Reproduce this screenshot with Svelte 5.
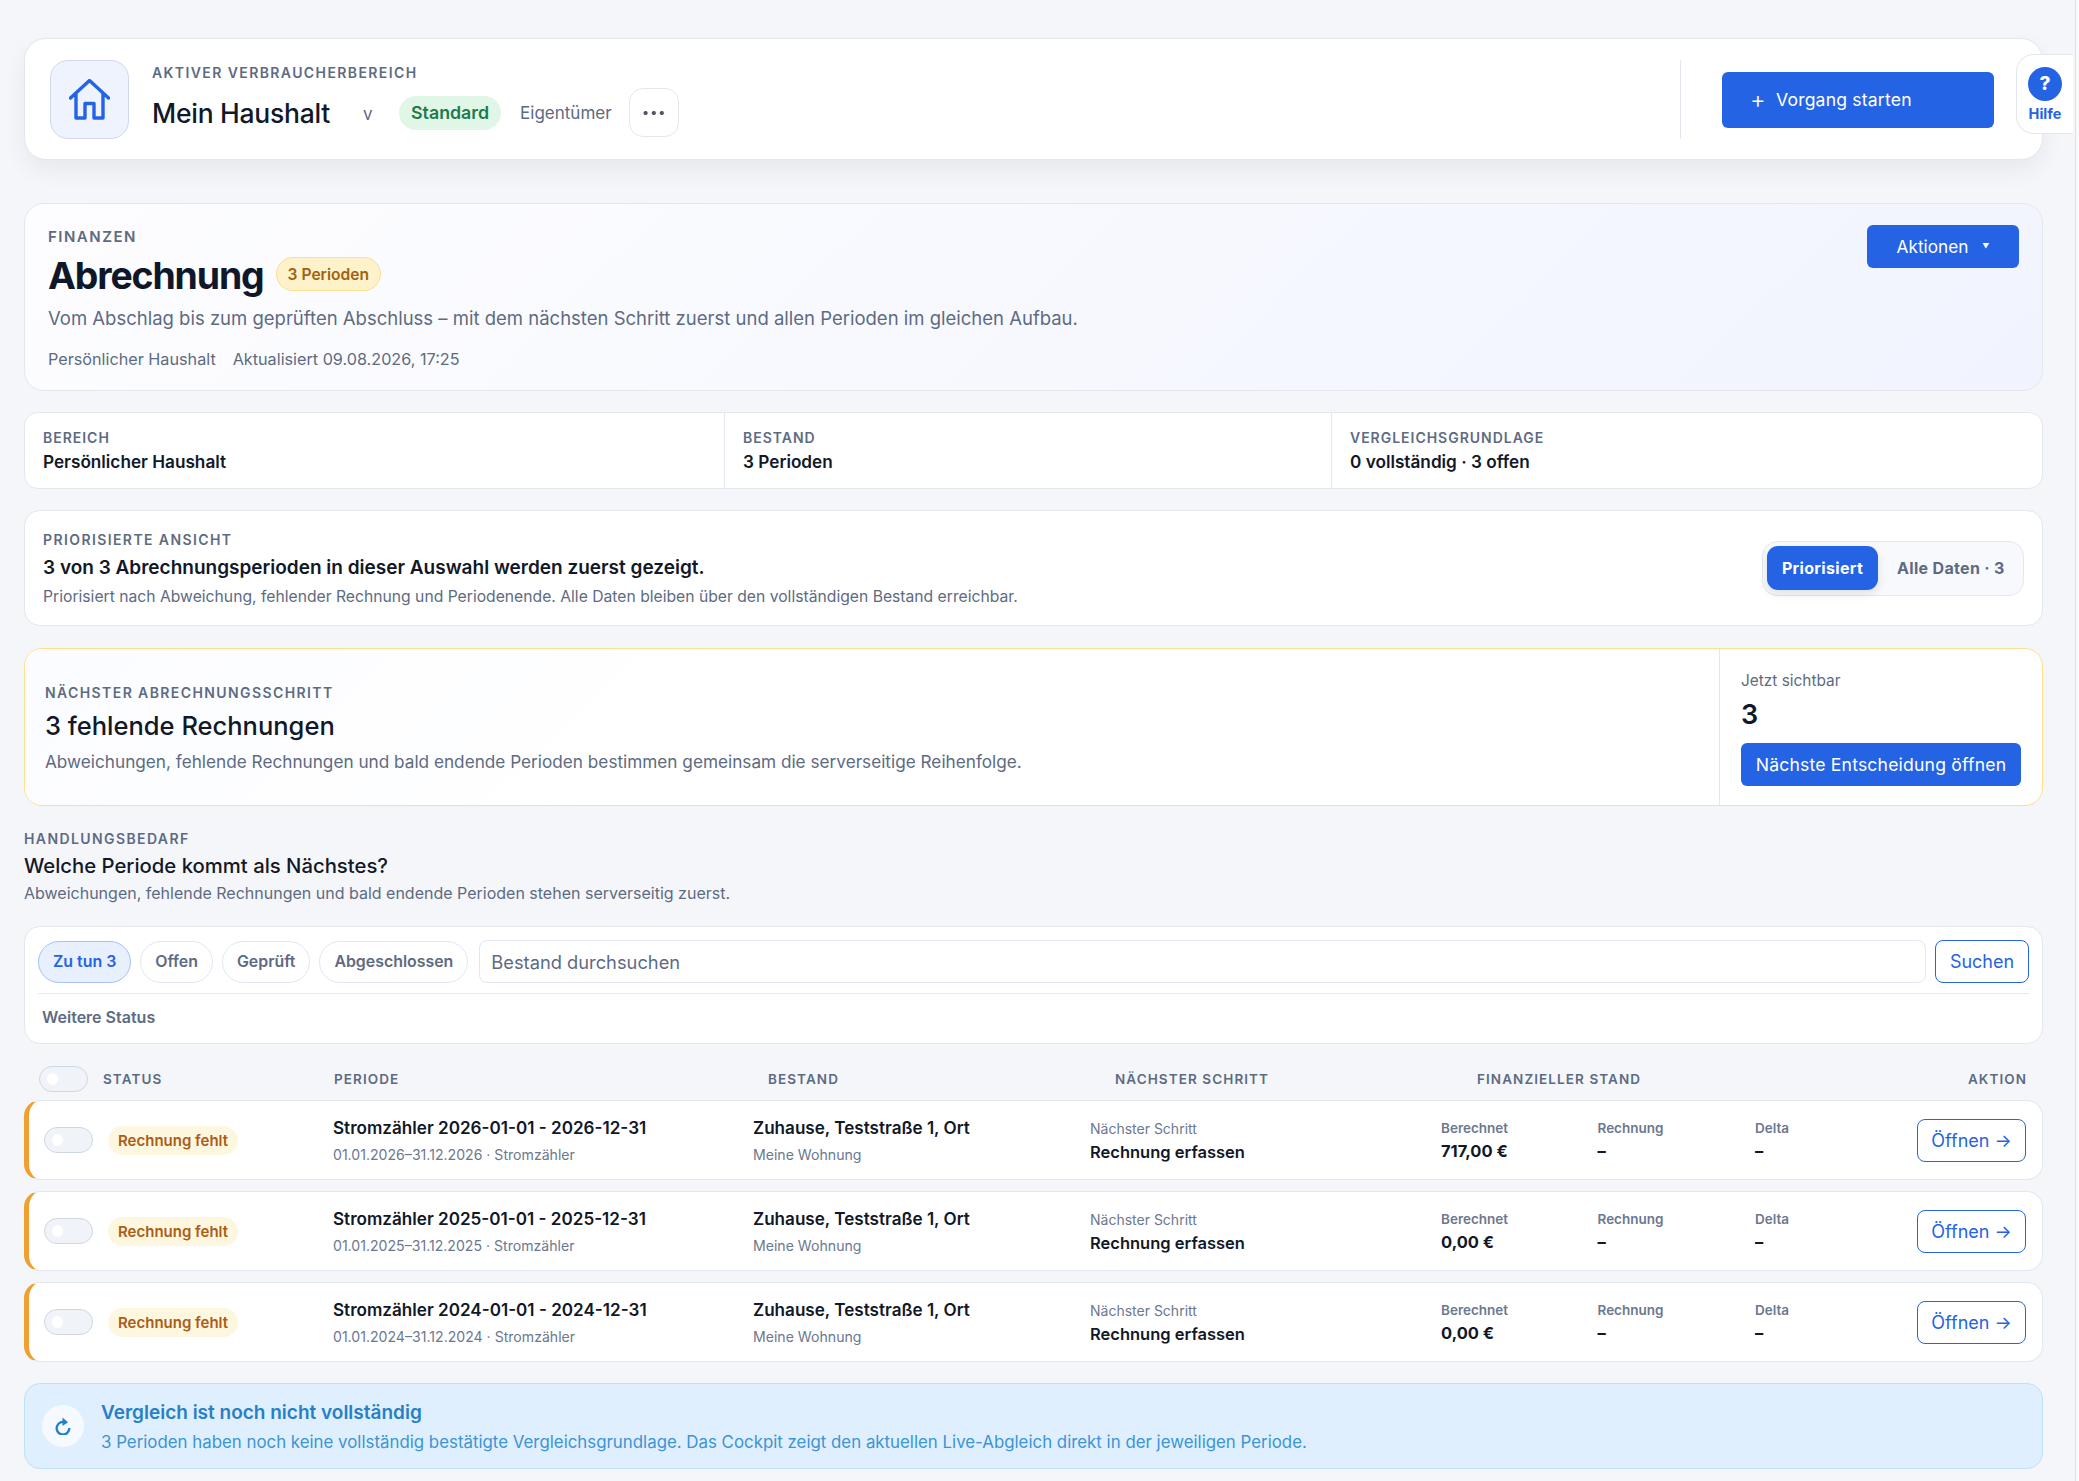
<script>
const rows = [
	{ title: 'Stromzähler 2026-01-01 - 2026-12-31', range: '01.01.2026–31.12.2026 · Stromzähler', amount: '717,00 €' },
	{ title: 'Stromzähler 2025-01-01 - 2025-12-31', range: '01.01.2025–31.12.2025 · Stromzähler', amount: '0,00 €' },
	{ title: 'Stromzähler 2024-01-01 - 2024-12-31', range: '01.01.2024–31.12.2024 · Stromzähler', amount: '0,00 €' }
];
const pills = ['Offen', 'Geprüft', 'Abgeschlossen'];
</script>

<div class="page">
	<main class="main">
		<header class="topbar">
			<div class="home">
				<svg width="41" height="41" viewBox="0 0 41 41" fill="none" stroke="#2563e5" stroke-width="3.4" stroke-linejoin="round" stroke-linecap="round">
					<path d="M1.5 19 L20.5 1.5 L39.5 19 M7 14.5 V39 H16 V24.5 H25 V39 H34 V14.5" />
				</svg>
			</div>
			<div class="scope">
				<div class="eyebrow">AKTIVER VERBRAUCHERBEREICH</div>
				<div class="scope-row">
					<span class="scope-name">Mein Haushalt</span>
					<span class="scope-caret">v</span>
					<span class="pill-green">Standard</span>
					<span class="role">Eigentümer</span>
					<button class="dots">···</button>
				</div>
			</div>
			<div class="top-action">
				<button class="btn start"><span class="plus">+</span>Vorgang starten</button>
			</div>
			<div class="help">
				<span class="help-dot">?</span>
				<span class="help-label">Hilfe</span>
			</div>
		</header>

		<section class="hero">
			<div>
				<div class="eyebrow hero-label">FINANZEN</div>
				<div class="hero-title">
					<h1>Abrechnung</h1>
					<span class="pill-amber">3 Perioden</span>
				</div>
				<p class="hero-desc">Vom Abschlag bis zum geprüften Abschluss – mit dem nächsten Schritt zuerst und allen Perioden im gleichen Aufbau.</p>
				<div class="hero-meta"><span>Persönlicher Haushalt</span><span>Aktualisiert 09.08.2026, 17:25</span></div>
			</div>
			<button class="btn actions">Aktionen<span class="tri">▼</span></button>
		</section>

		<section class="summary">
			<div class="cell"><div class="eyebrow small">BEREICH</div><div class="cell-value">Persönlicher Haushalt</div></div>
			<div class="cell"><div class="eyebrow small">BESTAND</div><div class="cell-value">3 Perioden</div></div>
			<div class="cell"><div class="eyebrow small">VERGLEICHSGRUNDLAGE</div><div class="cell-value">0 vollständig · 3 offen</div></div>
		</section>

		<section class="priority">
			<div class="priority-text">
				<div class="eyebrow small">PRIORISIERTE ANSICHT</div>
				<div class="priority-title">3 von 3 Abrechnungsperioden in dieser Auswahl werden zuerst gezeigt.</div>
				<div class="priority-sub">Priorisiert nach Abweichung, fehlender Rechnung und Periodenende. Alle Daten bleiben über den vollständigen Bestand erreichbar.</div>
			</div>
			<div class="segment">
				<span class="seg on">Priorisiert</span>
				<span class="seg">Alle Daten · 3</span>
			</div>
		</section>

		<section class="next">
			<div class="next-main">
				<div class="eyebrow small">NÄCHSTER ABRECHNUNGSSCHRITT</div>
				<h2>3 fehlende Rechnungen</h2>
				<p>Abweichungen, fehlende Rechnungen und bald endende Perioden bestimmen gemeinsam die serverseitige Reihenfolge.</p>
			</div>
			<div class="next-side">
				<div class="side-label">Jetzt sichtbar</div>
				<div class="side-count">3</div>
				<button class="btn decide">Nächste Entscheidung öffnen</button>
			</div>
		</section>

		<section class="need">
			<div class="eyebrow small">HANDLUNGSBEDARF</div>
			<h3>Welche Periode kommt als Nächstes?</h3>
			<p>Abweichungen, fehlende Rechnungen und bald endende Perioden stehen serverseitig zuerst.</p>
		</section>

		<section class="filters">
			<div class="filter-row">
				<span class="fpill active">Zu tun 3</span>
				{#each pills as p}
					<span class="fpill">{p}</span>
				{/each}
				<input class="search" placeholder="Bestand durchsuchen" />
				<button class="search-btn">Suchen</button>
			</div>
			<div class="more">Weitere Status</div>
		</section>

		<div class="thead">
			<div class="th-status"><span class="toggle"></span><span>STATUS</span></div>
			<div>PERIODE</div>
			<div>BESTAND</div>
			<div>NÄCHSTER SCHRITT</div>
			<div>FINANZIELLER STAND</div>
			<div class="th-action">AKTION</div>
		</div>

		<div class="rows">
			{#each rows as r}
				<article class="row">
					<div class="status"><span class="toggle"></span><span class="missing">Rechnung fehlt</span></div>
					<div class="text-block">
						<div class="strong">{r.title}</div>
						<div class="sub">{r.range}</div>
					</div>
					<div class="text-block">
						<div class="strong">Zuhause, Teststraße 1, Ort</div>
						<div class="sub">Meine Wohnung</div>
					</div>
					<div>
						<div class="step-label">Nächster Schritt</div>
						<div class="step">Rechnung erfassen</div>
					</div>
					<div class="money">
						<div><div class="money-label">Berechnet</div><div class="money-value">{r.amount}</div></div>
						<div><div class="money-label">Rechnung</div><div class="money-value">–</div></div>
						<div><div class="money-label">Delta</div><div class="money-value">–</div></div>
					</div>
					<button class="open">Öffnen →</button>
				</article>
			{/each}
		</div>

		<section class="notice">
			<span class="notice-icon">
				<svg width="16" height="18" viewBox="0 0 16 18" fill="none" stroke="#2680c8" stroke-width="2.4">
					<path d="M11.5 6 A6.3 6.3 0 1 0 14.3 11" />
					<path d="M7.5 0.5 L13 5.2 L7.5 9 Z" fill="#2680c8" stroke="none" />
				</svg>
			</span>
			<div class="notice-body">
				<div class="notice-title">Vergleich ist noch nicht vollständig</div>
				<div class="notice-text">3 Perioden haben noch keine vollständig bestätigte Vergleichsgrundlage. Das Cockpit zeigt den aktuellen Live-Abgleich direkt in der jeweiligen Periode.</div>
			</div>
		</section>
	</main>
	<div class="rail"></div>
</div>

<style>
:global(body) {
	margin: 0;
	background: #f5f6fa;
}
.page {
	display: flex;
	min-height: 1481px;
	font-family: Inter, "Liberation Sans", sans-serif;
	color: #111827;
}
.main {
	flex: 1;
	min-width: 0;
	box-sizing: border-box;
	padding: 38px 32px 0 24px;
}
.rail {
	width: 4px;
	border-left: 1px solid #dcdfe6;
	box-sizing: border-box;
	background: #f9f9fb;
}
button {
	font-family: inherit;
	cursor: pointer;
}
h1, h2, h3, p {
	margin: 0;
}
.eyebrow {
	font-size: 14px;
	line-height: 16px;
	font-weight: 600;
	letter-spacing: 0.1em;
	color: #5d6b82;
}
.eyebrow.small {
	font-size: 14px;
}
.eyebrow.hero-label {
	font-size: 15px;
}
.btn {
	background: #2563e5;
	color: #fff;
	border: 0;
	border-radius: 6px;
	font-weight: 400;
}

/* top bar */
.topbar {
	position: relative;
	display: flex;
	align-items: center;
	height: 122px;
	box-sizing: border-box;
	padding: 0 48px 0 25px;
	background: #fff;
	border: 1px solid #e3e7ef;
	border-radius: 22px;
	box-shadow: 0 10px 24px rgba(15, 23, 42, 0.06);
}
.home {
	width: 79px;
	height: 79px;
	box-sizing: border-box;
	display: flex;
	align-items: center;
	justify-content: center;
	background: #eff3fd;
	border: 1px solid #cdd8ef;
	border-radius: 18px;
}
.scope {
	margin-left: 23px;
	flex: 1;
	padding-top: 4px;
}
.scope-row {
	display: flex;
	align-items: center;
	margin-top: 7px;
	height: 49px;
}
.scope-name {
	font-size: 26.5px;
	font-weight: 500;
	letter-spacing: -0.01em;
	width: 211px;
}
.scope-caret {
	font-size: 17px;
	color: #5d6b82;
	width: 36px;
	padding-top: 3px;
}
.pill-green {
	display: flex;
	align-items: center;
	height: 34px;
	padding: 0 12px;
	background: #e0f7e8;
	color: #1f7a4d;
	font-size: 17.8px;
	font-weight: 600;
	border-radius: 17px;
}
.role {
	margin-left: 19px;
	font-size: 17px;
	color: #5d6b82;
}
.dots {
	margin-left: 17px;
	width: 50px;
	height: 49px;
	background: #fff;
	border: 1px solid #e3e7ef;
	border-radius: 14px;
	color: #4a5568;
	font-size: 24px;
	font-weight: 700;
	line-height: 1;
	padding: 0;
}
.top-action {
	display: flex;
	align-items: center;
	height: 79px;
	padding-left: 41px;
	border-left: 1px solid #e3e7ef;
}
.start {
	width: 272px;
	height: 56px;
	margin-top: 1px;
	display: flex;
	align-items: center;
	padding: 0 0 0 28px;
	font-size: 17.6px;
	letter-spacing: 0.01em;
}
.plus {
	font-size: 24px;
	font-weight: 300;
	width: 26px;
	text-align: left;
	line-height: 1;
}
.help {
	position: absolute;
	top: 15px;
	right: -31px;
	width: 57px;
	height: 80px;
	box-sizing: border-box;
	padding-top: 12px;
	display: flex;
	flex-direction: column;
	align-items: center;
	background: #fff;
	border: 1px solid #e3e7ef;
	border-right: 0;
	border-radius: 18px 0 0 18px;
}
.help-dot {
	width: 34px;
	height: 34px;
	border-radius: 50%;
	background: #2563e5;
	color: #fff;
	font-size: 19px;
	font-weight: 800;
	line-height: 34px;
	text-align: center;
}
.help-label {
	margin-top: 5px;
	font-size: 14.5px;
	line-height: 16px;
	font-weight: 700;
	color: #2563e5;
}

/* hero */
.hero {
	margin-top: 43px;
	height: 188px;
	box-sizing: border-box;
	display: flex;
	justify-content: space-between;
	align-items: flex-start;
	padding: 25px 23px 0 23px;
	background: linear-gradient(135deg, #fdfdff, #f1f4fe);
	border: 1px solid #e3e7ef;
	border-radius: 20px;
}
.hero-title {
	display: flex;
	align-items: center;
	margin-top: 6px;
	height: 48px;
}
h1 {
	font-size: 37.4px;
	font-weight: 700;
	letter-spacing: -0.03em;
	color: #0f172a;
}
.pill-amber {
	display: flex;
	align-items: center;
	height: 34px;
	box-sizing: border-box;
	margin: -2px 0 0 12px;
	padding: 0 11px;
	background: #fdf2c9;
	border: 1px solid #fbe08f;
	border-radius: 17px;
	color: #a1620f;
	font-size: 15.6px;
	font-weight: 600;
}
.hero-desc {
	margin-top: 6px;
	font-size: 18.5px;
	line-height: 26px;
	color: #5d6b82;
}
.hero-meta {
	margin-top: 18px;
	display: flex;
	gap: 17px;
	font-size: 16.2px;
	line-height: 20px;
	color: #5d6b82;
}
.actions {
	margin-top: -4px;
	width: 152px;
	height: 43px;
	font-size: 17.2px;
	display: flex;
	align-items: center;
	justify-content: center;
}
.tri {
	margin-left: 14px;
	font-size: 7px;
}

/* summary */
.summary {
	margin-top: 21px;
	height: 77px;
	box-sizing: border-box;
	display: grid;
	grid-template-columns: 699px 607px 1fr;
	background: #fff;
	border: 1px solid #e3e7ef;
	border-radius: 14px;
}
.cell {
	padding: 17px 18px 0;
}
.cell .eyebrow {
	letter-spacing: 0.07em;
}
.cell + .cell {
	border-left: 1px solid #e3e7ef;
}
.cell-value {
	margin-top: 6px;
	font-size: 17.2px;
	line-height: 20px;
	font-weight: 600;
}

/* priority */
.priority {
	margin-top: 21px;
	height: 116px;
	box-sizing: border-box;
	display: flex;
	justify-content: space-between;
	align-items: center;
	padding: 0 18px 0 18px;
	background: #fff;
	border: 1px solid #e3e7ef;
	border-radius: 16px;
}
.priority-text {
	padding-top: 2px;
}
.priority-title {
	margin-top: 7px;
	font-size: 19px;
	line-height: 26px;
	font-weight: 600;
}
.priority-sub {
	margin-top: 6px;
	font-size: 15.7px;
	line-height: 20px;
	color: #5d6b82;
}
.segment {
	display: flex;
	align-items: center;
	height: 55px;
	box-sizing: border-box;
	padding: 0 4px;
	width: 262px;
	background: #f8f9fc;
	border: 1px solid #e3e7ef;
	border-radius: 15px;
}
.seg {
	font-size: 16px;
	font-weight: 700;
	letter-spacing: 0.02em;
	color: #5d6b82;
	padding-left: 19px;
}
.seg.on {
	display: flex;
	align-items: center;
	justify-content: center;
	width: 111px;
	height: 44px;
	padding: 0;
	background: #2563e5;
	color: #fff;
	border-radius: 11px;
	box-shadow: 0 4px 10px rgba(15, 23, 42, 0.1);
}

/* next step */
.next {
	margin-top: 22px;
	height: 158px;
	box-sizing: border-box;
	display: flex;
	background: #fff;
	border: 1px solid #fde08a;
	border-radius: 18px;
	overflow: hidden;
}
.next-main {
	flex: 1;
	padding: 36px 0 0 20px;
	background: linear-gradient(135deg, #fbfcff, #fff 40%);
	border-right: 1px solid #e3e7ef;
}
h2 {
	margin-top: 7px;
	font-size: 25.5px;
	line-height: 36px;
	font-weight: 500;
}
.next-main p {
	margin-top: 6px;
	font-size: 17.2px;
	line-height: 24px;
	color: #5d6b82;
}
.next-side {
	width: 322px;
	flex: none;
	box-sizing: border-box;
	padding: 22px 0 0 21px;
}
.side-label {
	font-size: 15.4px;
	line-height: 20px;
	color: #5d6b82;
}
.side-count {
	margin-top: 6px;
	font-size: 27px;
	line-height: 36px;
	font-weight: 600;
}
.decide {
	display: block;
	margin-top: 10px;
	width: 280px;
	height: 43px;
	padding: 0;
	font-size: 17.6px;
	letter-spacing: 0.01em;
}

/* section heading */
.need {
	margin-top: 25px;
}
h3 {
	margin-top: 5px;
	font-size: 20.3px;
	line-height: 28px;
	font-weight: 500;
}
.need p {
	margin-top: 3px;
	font-size: 16px;
	line-height: 20px;
	color: #5d6b82;
}

/* filters */
.filters {
	margin-top: 23px;
	height: 118px;
	box-sizing: border-box;
	padding: 13px 13px 0 13px;
	background: #fff;
	border: 1px solid #e3e7ef;
	border-radius: 16px;
}
.filter-row {
	display: flex;
	align-items: center;
	gap: 9px;
	height: 43px;
	padding-bottom: 10px;
	border-bottom: 1px solid #e6e9ef;
}
.fpill {
	display: flex;
	align-items: center;
	height: 42px;
	box-sizing: border-box;
	padding: 0 14px;
	border: 1px solid #e3e7ef;
	border-radius: 21px;
	background: #fff;
	font-size: 15.9px;
	font-weight: 600;
	color: #5d6b82;
}
.fpill.active {
	background: #e8effd;
	border-color: #a9c2f5;
	color: #2563e5;
}
.search {
	flex: 1;
	min-width: 0;
	height: 43px;
	box-sizing: border-box;
	margin-left: 2px;
	padding: 0 11px;
	border: 1px solid #e3e7ef;
	border-radius: 8px;
	font-family: inherit;
	font-size: 18.3px;
	outline: none;
}
.search::placeholder {
	color: #5d6b82;
	opacity: 1;
}
.search-btn {
	width: 94px;
	height: 43px;
	padding: 0;
	background: #fff;
	border: 1px solid #2563e5;
	border-radius: 8px;
	color: #2563e5;
	font-size: 18px;
}
.more {
	margin: 13px 0 0 4px;
	font-size: 16px;
	line-height: 20px;
	font-weight: 600;
	color: #5d6b82;
}

/* table */
.thead {
	display: grid;
	grid-template-columns: 295px 434px 347px 362px 1fr 80px;
	align-items: center;
	height: 43px;
	padding: 13px 16px 0 15px;
	font-size: 13.5px;
	font-weight: 600;
	letter-spacing: 0.08em;
	color: #5d6b82;
}
.th-status {
	display: flex;
	align-items: center;
	gap: 15px;
}
.th-action {
	text-align: right;
}
.toggle {
	display: block;
	position: relative;
	flex: none;
	width: 49px;
	height: 26px;
	box-sizing: border-box;
	background: #f0f3f8;
	border: 1px solid #cfd7e4;
	border-radius: 13px;
}
.toggle::after {
	content: "";
	position: absolute;
	left: 7px;
	top: 6px;
	width: 11px;
	height: 12px;
	border-radius: 50%;
	background: #fff;
}
.rows {
	display: flex;
	flex-direction: column;
	gap: 11px;
}
.row {
	display: grid;
	grid-template-columns: 289px 420px 337px 351px 476px 109px;
	align-items: center;
	height: 80px;
	box-sizing: border-box;
	padding-left: 15px;
	background: #fff;
	border: 1px solid #e3e7ef;
	border-left: 5px solid #f0a030;
	border-radius: 16px;
}
.status {
	display: flex;
	align-items: center;
	gap: 15px;
}
.missing {
	display: flex;
	align-items: center;
	height: 29px;
	padding: 0 10px;
	background: #fef7e0;
	border-radius: 15px;
	color: #ad5c14;
	font-size: 15px;
	font-weight: 600;
}
.text-block {
	padding-top: 3px;
}
.strong {
	font-size: 17.1px;
	line-height: 20px;
	font-weight: 600;
	color: #111827;
}
.sub {
	margin-top: 7px;
	font-size: 14.1px;
	line-height: 20px;
	color: #6b7890;
}
.step-label {
	font-size: 14px;
	line-height: 20px;
	color: #6b7890;
}
.step {
	margin-top: 3px;
	font-size: 16.5px;
	line-height: 20px;
	font-weight: 600;
}
.money {
	display: grid;
	grid-template-columns: 156.5px 157.5px 1fr;
}
.money-label {
	font-size: 13.5px;
	line-height: 18px;
	font-weight: 600;
	color: #6b7890;
}
.money-value {
	margin-top: 4px;
	font-size: 16.5px;
	line-height: 20px;
	font-weight: 700;
}
.open {
	width: 109px;
	height: 43px;
	padding: 0;
	background: #fff;
	border: 1px solid #2563e5;
	border-radius: 8px;
	color: #2563e5;
	font-size: 18px;
	white-space: nowrap;
}

/* notice */
.notice {
	margin-top: 21px;
	height: 86px;
	box-sizing: border-box;
	display: flex;
	align-items: center;
	gap: 17px;
	padding-left: 17px;
	background: #e0effd;
	border: 1px solid #bfe0fb;
	border-radius: 16px;
}
.notice-icon {
	width: 42px;
	height: 42px;
	flex: none;
	display: flex;
	align-items: center;
	justify-content: center;
	border-radius: 50%;
	background: #f4faff;
}
.notice-body {
	padding-top: 2px;
}
.notice-title {
	font-size: 19px;
	line-height: 26px;
	font-weight: 600;
	color: #2680c8;
}
.notice-text {
	margin-top: 4px;
	font-size: 16.85px;
	line-height: 24px;
	color: #3b94d6;
}
</style>
